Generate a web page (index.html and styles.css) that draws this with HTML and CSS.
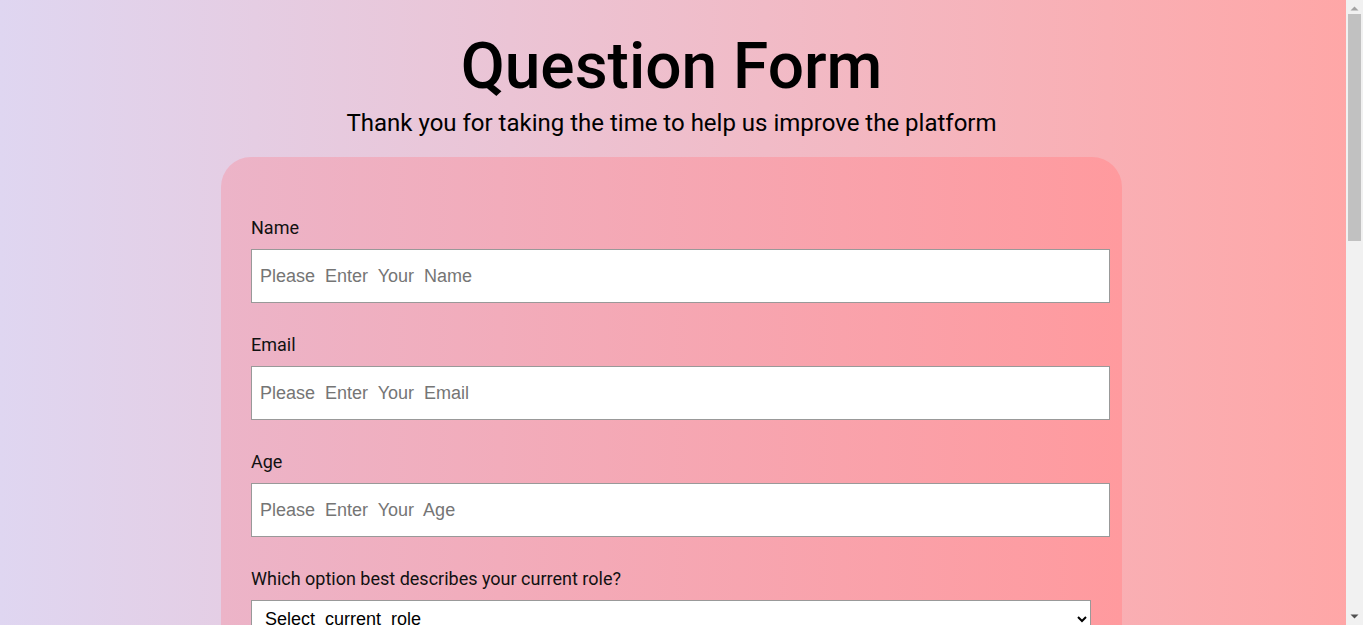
FILE: index.html
```html
<!DOCTYPE html>
<html lang="en">
<head>
<meta charset="utf-8">
<title>Question Form</title>
<link rel="stylesheet" href="styles.css">
</head>
<body>
  <div class="page">
    <header class="header">
      <h1 class="title">Question Form</h1>
      <p class="subtitle">Thank you for taking the time to help us improve the platform</p>
    </header>
    <form class="card">
      <div class="group">
        <label class="label" for="name">Name</label>
        <input class="field" id="name" type="text" placeholder="Please  Enter  Your  Name">
      </div>
      <div class="group">
        <label class="label" for="email">Email</label>
        <input class="field" id="email" type="email" placeholder="Please  Enter  Your  Email">
      </div>
      <div class="group">
        <label class="label" for="age">Age</label>
        <input class="field" id="age" type="number" placeholder="Please  Enter  Your  Age">
      </div>
      <div class="group">
        <label class="label" for="role">Which option best describes your current role?</label>
        <select class="select" id="role">
          <option>Select&nbsp; current&nbsp; role</option>
          <option>Student</option>
          <option>Full Time Job</option>
          <option>Prefer not to say</option>
        </select>
      </div>
      <div class="group">
        <label class="label" for="comments">Any comments or suggestions?</label>
        <textarea class="area" id="comments" placeholder="Enter your comment here..."></textarea>
      </div>
      <button class="submit" type="submit">Submit</button>
    </form>
  </div>
  <div class="scrollbar" aria-hidden="true">
    <svg class="arrow up" width="17" height="17" viewBox="0 0 17 17"><path d="M4.5 10.5 L8.5 6.5 L12.5 10.5 Z" fill="#a3a3a3"/></svg>
    <div class="thumb"></div>
    <svg class="arrow down" width="17" height="17" viewBox="0 0 17 17"><path d="M4.5 6.5 L8.5 10.5 L12.5 6.5 Z" fill="#505050"/></svg>
  </div>
</body>
</html>
```
FILE: styles.css
```css
html {
  background: linear-gradient(to right, #dfd6f1, #ffa6a6);
  min-height: 100%;
}
body {
  margin: 0 20px 0 0;
  font-family: Roboto, "Liberation Sans", sans-serif;
  color: #000;
}
.page {
  padding-bottom: 40px;
}
.header {
  text-align: center;
  padding-top: 27px;
}
.title {
  margin: 0;
  font-size: 64px;
  font-weight: 500;
  line-height: 80px;
}
.subtitle {
  margin: 0;
  font-size: 24px;
  line-height: 32px;
}
.card {
  width: 901px;
  box-sizing: border-box;
  margin: 18px auto 0;
  padding: 60px 12px 40px 30px;
  border-radius: 30px;
  background: linear-gradient(to right, #ecb4c8, #ff9a9e);
}
.group {
  margin-bottom: 31px;
}
.label {
  display: block;
  font-size: 18px;
  line-height: 21px;
  color: #111;
  margin-bottom: 11px;
}
.field {
  display: block;
  width: 100%;
  height: 54px;
  box-sizing: border-box;
  border: 1px solid #999;
  background: #fff;
  padding: 0 8px;
  font-family: "Liberation Sans", Arial, sans-serif;
  font-size: 18px;
  outline: none;
}
.field::placeholder {
  color: #757575;
}
.select {
  display: block;
  width: 840px;
  height: 38px;
  box-sizing: border-box;
  border: 1px solid #999;
  background: #fff;
  padding: 0 9px;
  font-family: "Liberation Sans", Arial, sans-serif;
  font-size: 18px;
  color: #000;
}
.area {
  display: block;
  width: 100%;
  height: 120px;
  box-sizing: border-box;
  border: 1px solid #999;
  padding: 8px;
  font-family: "Liberation Sans", Arial, sans-serif;
  font-size: 18px;
  resize: vertical;
}
.submit {
  display: block;
  width: 100%;
  height: 50px;
  border: none;
  border-radius: 4px;
  background: #ff6b81;
  color: #fff;
  font-size: 18px;
  font-family: Roboto, "Liberation Sans", sans-serif;
}
.scrollbar {
  position: fixed;
  top: 0;
  right: 0;
  width: 17px;
  height: 100vh;
  background: #f1f1f1;
  display: flex;
  flex-direction: column;
  align-items: center;
}
.arrow {
  display: block;
  flex: none;
}
.thumb {
  flex: none;
  width: 13px;
  margin-top: -3px;
  height: 227px;
  background: #c1c1c1;
}
.arrow.down {
  margin-top: auto;
}
```
